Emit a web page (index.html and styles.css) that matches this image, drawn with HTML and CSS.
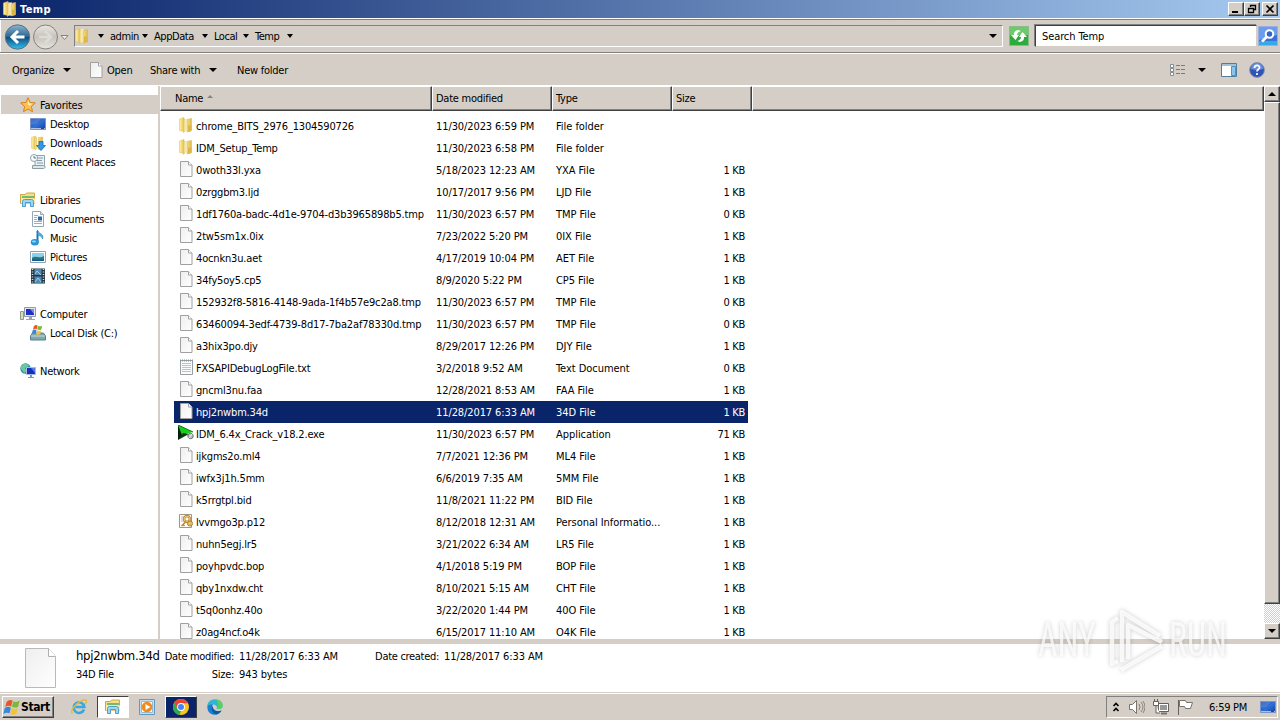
FILE: index.html
```html
<!DOCTYPE html>
<html lang="en">

<head>
    <meta charset="UTF-8">
    <title>Temp</title>
    <link rel="stylesheet" href="styles.css">
</head>

<body>

    <svg class="defs" aria-hidden="true">
        <defs>
            <linearGradient id="gold" x1="0" x2="1"><stop offset="0" stop-color="#fff3b0"/><stop offset=".5" stop-color="#f3db7a"/><stop offset="1" stop-color="#dfb94a"/></linearGradient>
            <linearGradient id="paper" x1="0" y1="0" x2="1" y2="1"><stop offset="0" stop-color="#eee"/><stop offset="1" stop-color="#fff"/></linearGradient>
            <linearGradient id="blue" x1="0" y1="0" x2="1" y2="1"><stop offset="0" stop-color="#183da5"/><stop offset=".5" stop-color="#2f72d8"/><stop offset="1" stop-color="#193b9a"/></linearGradient>
            <linearGradient id="backFill" x1="0" y1="0" x2="0" y2="1"><stop offset="0" stop-color="#8eb5cd"/><stop offset=".48" stop-color="#2b6695"/><stop offset=".5" stop-color="#10487c"/><stop offset="1" stop-color="#30c3f2"/></linearGradient>
            <linearGradient id="fwdFill" x1="0" y1="0" x2="0" y2="1"><stop offset="0" stop-color="#e9e7e2"/><stop offset=".5" stop-color="#c6c3be"/><stop offset="1" stop-color="#e8e5df"/></linearGradient>
        </defs>
        <symbol id="folder" viewBox="0 0 16 16">
            <path d="M1.500 2 6 .5v14l-4.500-1z" fill="url(#gold)" stroke="#e2c566" stroke-width=".6"/>
            <path d="M6 1.500h4v13H6z" fill="#fffae0"/>
            <path d="M5.500 3 7 2v12l-1.500 1.500zM9 2.500l4.500-1v12L9 15z" fill="url(#gold)" stroke="#d9b954" stroke-width=".6"/>
            <path d="M10 8.500h3.500V14L10 15z" fill="#dcb748"/>
        </symbol>
        <symbol id="file" viewBox="0 0 16 16">
            <path d="M2.500.5h8l3.500 3.500v11.500h-11.500z" fill="url(#paper)" stroke="#a0a0a0"/>
            <path d="M10.500 .5V4h3.500" fill="#fff" stroke="#a0a0a0"/>
        </symbol>
        <symbol id="text" viewBox="0 0 16 16">
            <path d="M2.500 1.500h12v14h-12z" fill="#fafcfc" stroke="#96a0a4"/>
            <path d="M2 1.500h13" stroke="#8b979b" stroke-width="2" stroke-dasharray="1 1"/>
            <path d="M4 4.500h9M4 6.500h9M4 8.500h9M4 10.500h9M4 12.500h9" stroke="#b5c6ce"/>
        </symbol>
        <symbol id="idm" viewBox="0 0 16 16">
            <path d="M0 0v15l6-5z" fill="#06200a"/>
            <path d="M0 0 15 7 4 10z" fill="#16cf19"/>
            <path d="M0 15l5-7 6 1z" fill="#123b13"/>
            <path d="M0 0l15 7" stroke="#087a12"/>
            <circle cx="12.500" cy="11" r="2.700" fill="#b8c2c2" stroke="#67706e"/>
            <path d="M10 14l5-6" stroke="#eef1f1"/>
        </symbol>
        <symbol id="cert" viewBox="0 0 16 16">
            <path d="M1.500 1.500h12v13h-12z" fill="#fffef7" stroke="#9e9785"/>
            <path d="M3 4h5M3 6h4M3 8h4" stroke="#b8b8ae"/>
            <circle cx="9" cy="6" r="2.800" fill="none" stroke="#a87420" stroke-width="2.200"/>
            <circle cx="9" cy="6" r="2.800" fill="none" stroke="#eec677" stroke-width="1.100"/>
            <circle cx="12" cy="10.500" r="2.600" fill="#e8bc66" stroke="#936318" stroke-width=".7"/>
            <path d="M8 8.500L3.500 13M5 11.500l1.500 1.500" stroke="#c08c37" stroke-width="1.700"/>
        </symbol>
        <symbol id="star" viewBox="0 0 16 16">
            <path d="M8 .7l2.100 4.700 5.200.5-3.900 3.600 1.100 5.200L8 12.100l-4.500 2.600 1.100-5.200L.7 5.900l5.200-.5z" fill="#ffc24f" stroke="#d7831e"/>
            <path d="M8 3l1.300 3.500 3 .3-2.400 1.800L8 7.500z" fill="#fff0ae"/>
        </symbol>
        <symbol id="desktop" viewBox="0 0 16 16">
            <path d="M.5 2.500h15v11H.5z" fill="url(#blue)" stroke="#7a94c8"/>
            <path d="M1 3h10L6 8 1 9z" fill="#709be3" opacity=".45"/>
            <path d="M1 12.500h14" stroke="#aabfe4"/>
            <path d="M11 12.500h3" stroke="#32417a"/>
        </symbol>
        <symbol id="downloads" viewBox="0 0 16 16">
            <use href="#folder" x="0" width="15" height="16"/>
            <path d="M9 6.500h4v4h2.500L11 15.500 6.500 10.500H9z" fill="#2e9bea" stroke="#1769b0" stroke-width=".8"/>
        </symbol>
        <symbol id="recent" viewBox="0 0 16 16">
            <path d="M5 1.500h9.500v11H5z" fill="#e9f1f4" stroke="#91a4ad"/>
            <path d="M7 4h6M7 6.500h5M7 9h6" stroke="#859ca7"/>
            <path d="M2.500 11.500h11c2 0 2 3 0 3h-11z" fill="#dce5e8" stroke="#8a9da5"/>
            <circle cx="4" cy="4" r="3.500" fill="#f7fcff" stroke="#8ba3ae"/>
            <path d="M4 2v2h2" fill="none" stroke="#597786"/>
        </symbol>
        <symbol id="libraries" viewBox="0 0 16 16">
            <path d="M.5 2.500h5l1-1.500h8v10.500H.5z" fill="#f5df89" stroke="#cfa943"/>
            <path d="M2 4.500h12M2 5.500h12" stroke="#79b96e"/>
            <path d="M1 6.500h14v5H1z" fill="#ffebaa"/>
            <path d="M2.500 14.500V9.500q0-2 2-2h7q2 0 2 2v5h-3v-4h-5v4z" fill="#9bd7f5" stroke="#4e9dcc"/>
        </symbol>
        <symbol id="documents" viewBox="0 0 16 16">
            <path d="M2.500.5h8l3 3v12h-11z" fill="#fff" stroke="#92a7b7"/>
            <path d="M10.500.5v3h3" fill="#dce7ee" stroke="#92a7b7"/>
            <path d="M4 4.500h4M4 6.500h3M4 8.500h3M4 10.500h8M4 12.500h8" stroke="#91b2ce"/>
            <path d="M8 5.500h4v4H8z" fill="#32669b"/>
        </symbol>
        <symbol id="music" viewBox="0 0 16 16">
            <path d="M7.500 1V12" stroke="#1876bd" stroke-width="2"/>
            <path d="M7.500 0c0 4 7 3 5 9 0-2.500-3-3.500-5-4z" fill="#4db4e8" stroke="#2174ae" stroke-width=".6"/>
            <ellipse cx="4.800" cy="12.300" rx="4" ry="3.300" fill="#2996da"/>
            <ellipse cx="4" cy="11.400" rx="2" ry="1" fill="#9ddcf9"/>
        </symbol>
        <symbol id="pictures" viewBox="0 0 16 16">
            <path d="M.5 2.500h15v11H.5z" fill="#fff" stroke="#8ba3b3"/>
            <path d="M2 4h12v8H2z" fill="#8bd1ed"/>
            <path d="M2 9c4-3 7 1 12-2v5H2z" fill="#2a7778"/>
            <path d="M2 10.500h12V12H2z" fill="#195891"/>
        </symbol>
        <symbol id="videos" viewBox="0 0 16 16">
            <path d="M1 .5h14v15H1z" fill="#293640"/>
            <path d="M4.500 1h7v6h-7zM4.500 8.500h7v6.500h-7z" fill="#4c8ab8"/>
            <path d="M5 6l2-3 4 4M5 14l3-4 3 4" fill="none" stroke="#a4d1e4"/>
            <path d="M2.500 1v14M13.500 1v14" stroke="#d3dde3" stroke-width="1.500" stroke-dasharray="1 1.500"/>
        </symbol>
        <symbol id="computer" viewBox="0 0 16 16">
            <path d="M.5 5.500h3v8h-3z" fill="#d1e1be" stroke="#8b9c89"/>
            <path d="M4.500 1.500h11v9h-11z" fill="#e3e6ed" stroke="#9399aa"/>
            <path d="M6 3h8v6H6z" fill="#1b31c4"/>
            <path d="M10 3h4v5z" fill="#788bea"/>
            <path d="M9 11h3v2h3v1H6v-1h3z" fill="#9aa1b2"/>
        </symbol>
        <symbol id="winflag" viewBox="0 0 16 16">
            <path d="M3.500 2.500Q6-.2 9 1.500L7.700 7Q5 5.500 2 7.500z" fill="#e95527"/>
            <path d="M9.700 2q3 1.700 6-.6l-1.500 5.800q-2.700 1.700-5.800.2z" fill="#77ba39"/>
            <path d="M1.700 8.500q3-2 5.700-.4L6.200 13.400Q3.300 12 .2 14z" fill="#3a87d7"/>
            <path d="M8.200 8.500q2.800 1.600 5.800 0l-1.400 5.400q-3 1.800-5.700.2z" fill="#f5c331"/>
        </symbol>
        <symbol id="disk" viewBox="0 0 16 16">
            <path d="M2.500 8h11l2 3v4H.5v-4z" fill="#80a6af" stroke="#597f88"/>
            <path d="M1 11h14" stroke="#c6dbde"/>
            <path d="M12 13h2" stroke="#40e15f"/>
            <use href="#winflag" x="1.500" y="-.5" width="11" height="11"/>
        </symbol>
        <symbol id="network" viewBox="0 0 16 16">
            <circle cx="5.500" cy="5.500" r="5.200" fill="#2b88a9"/>
            <path d="M1 3c3-4 8-2 8 0L5 5l2 3-3 2-3-4z" fill="#6bc89b"/>
            <path d="M6.500 4.500h9v7h-9z" fill="#1730bc" stroke="#a7bce2"/>
            <path d="M11 5h4v5z" fill="#5877e2"/>
            <path d="M10 12h2v2h2v1H8v-1h2z" fill="#7996bf"/>
        </symbol>
    </svg>

    <header class="title-bar">
        <svg class="icon"><use href="#folder"/></svg>
        <h1>Temp</h1>
        <div class="window-buttons">
            <button class="bevel"><svg viewBox="0 0 12 10"><path d="M2 8h6" stroke="#000" stroke-width="2"/></svg></button>
            <button class="bevel"><svg viewBox="0 0 12 10"><path d="M4.500 3V1.500h5v4H8M4 1.500h6M2.500 4.500h5v4h-5zM2 4.500h6" fill="none" stroke="#000" stroke-width="1.300"/></svg></button>
            <button class="bevel close"><svg viewBox="0 0 12 10"><path d="M2.500 1.500l7 7M9.500 1.500l-7 7" stroke="#000" stroke-width="1.700"/></svg></button>
        </div>
    </header>

    <nav class="address-row">
        <svg class="nav-buttons" viewBox="0 0 70 30">
            <circle cx="15.500" cy="16" r="12.200" fill="url(#backFill)" stroke="#567386"/>
            <path d="M16 10l-6 6 6 6M10.500 16h12" fill="none" stroke="#fff" stroke-width="3"/>
            <circle cx="43.500" cy="16" r="12" fill="url(#fwdFill)" stroke="#85827e"/>
            <path d="M43 10l6 6-6 6M37 16h11" fill="none" stroke="#dedbd6" stroke-width="2.500"/>
            <path d="M59 14.500h7L62.500 18.500z" fill="#eee" stroke="#85827e"/>
        </svg>
        <div class="path-box">
            <svg class="icon"><use href="#folder"/></svg>
            <i class="arrow first"></i><span class="c1">admin</span>
            <i class="arrow"></i><span class="c2">AppData</span>
            <i class="arrow"></i><span class="c3">Local</span>
            <i class="arrow"></i><span class="c4">Temp</span>
            <i class="arrow"></i>
            <i class="arrow big drop"></i>
        </div>
        <svg class="refresh" viewBox="0 0 20 20">
            <path d="M.5.5h19v19H.5z" fill="#2faa3c" stroke="#88bd87"/>
            <path d="M1 1h18v8H1z" fill="#6cca6d"/>
            <path d="M9 4C5 5 5 7 5 9H2l4.500 5L10 9H8q0-3 4-4z" fill="#fff"/>
            <path d="M11 16c4-1 4-3 4-5h3l-4.500-5L10 11h2q0 3-4 4z" fill="#fff"/>
        </svg>
        <div class="search">Search Temp</div>
        <svg class="go" viewBox="0 0 20 20">
            <path d="M.5.5h19v19H.5z" fill="#3870d4" stroke="#9caee0"/>
            <path d="M1 1h18v8L1 14z" fill="#6b9eea"/>
            <path d="M1 15h18v4H1z" fill="#36a9e9"/>
            <circle cx="11.500" cy="8" r="3.800" fill="#3365ca" stroke="#fff" stroke-width="2"/>
            <path d="M8.500 11l-4.500 4.500" stroke="#fff" stroke-width="2.600"/>
        </svg>
    </nav>

    <div class="toolbar">
        <span class="t-organize">Organize</span><i class="arrow big"></i>
        <svg class="icon t-icon"><use href="#file"/></svg>
        <span class="t-open">Open</span>
        <span class="t-share">Share with</span><i class="arrow big"></i>
        <span class="t-new">New folder</span>
        <div class="tools">
            <svg class="icon" viewBox="0 0 16 16"><path d="M.5 2.500h3v3h-3zM.5 6.500h3v3h-3zM.5 10.500h3v3h-3z" fill="#fff" stroke="#858c94"/><path d="M6 3.500h4M11 3.500h4M6 7.500h4M11 7.500h4M6 11.500h4M11 11.500h4" stroke="#747b84"/></svg>
            <i class="arrow big"></i>
            <svg class="icon pane" viewBox="0 0 16 16"><path d="M.5 1.500h15v13H.5z" fill="#fff" stroke="#507ca0"/><path d="M1 3h14" stroke="#a4c0d4" stroke-width="2"/><path d="M10.500 4.500h4v9h-4z" fill="#8bc5ea" stroke="#5190ba"/></svg>
            <svg class="icon" viewBox="0 0 16 16"><circle cx="8" cy="8" r="7.400" fill="#2f51b8" stroke="#8993ac"/><path d="M2 7a6 6 0 0 1 12 0Q8 9 2 7z" fill="#6c91dc"/><path d="M5.500 6c0-3.500 5-3.500 5-.5 0 2-2.500 2-2.500 4M8 11v2" fill="none" stroke="#fff" stroke-width="1.700"/></svg>
        </div>
    </div>

    <main class="content">
        <aside class="sidebar">
            <ul>
                <li class="root current"><svg class="icon"><use href="#star"/></svg><span>Favorites</span></li>
                <li><svg class="icon"><use href="#desktop"/></svg><span>Desktop</span></li>
                <li><svg class="icon"><use href="#downloads"/></svg><span>Downloads</span></li>
                <li><svg class="icon"><use href="#recent"/></svg><span>Recent Places</span></li>
            </ul>
            <ul>
                <li class="root"><svg class="icon"><use href="#libraries"/></svg><span>Libraries</span></li>
                <li><svg class="icon"><use href="#documents"/></svg><span>Documents</span></li>
                <li><svg class="icon"><use href="#music"/></svg><span>Music</span></li>
                <li><svg class="icon"><use href="#pictures"/></svg><span>Pictures</span></li>
                <li><svg class="icon"><use href="#videos"/></svg><span>Videos</span></li>
            </ul>
            <ul>
                <li class="root"><svg class="icon"><use href="#computer"/></svg><span>Computer</span></li>
                <li><svg class="icon"><use href="#disk"/></svg><span>Local Disk (C:)</span></li>
            </ul>
            <ul>
                <li class="root"><svg class="icon"><use href="#network"/></svg><span>Network</span></li>
            </ul>
        </aside>

        <section class="list">
            <div class="list-head">
                <div>Name <i class="sort"></i></div>
                <div>Date modified</div>
                <div>Type</div>
                <div>Size</div>
                <div></div>
            </div>
            <div class="rows" id="rows"></div>
        </section>

        <div class="scrollbar">
            <button class="bevel"><i class="arrow big up"></i></button>
            <div class="thumb bevel"></div>
            <div class="track"></div>
            <button class="bevel"><i class="arrow big"></i></button>
        </div>
    </main>

    <footer class="details">
        <svg class="big-file" viewBox="0 0 32 40">
            <path d="M.5.500h23l7 8v31H.5z" fill="url(#paper)" stroke="#b9b9b9"/>
            <path d="M23.500.5v8h7" fill="#fff" stroke="#b0b0b0"/>
        </svg>
        <div class="detail-name">
            <span class="file-name">hpj2nwbm.34d</span>
            <span>34D File</span>
        </div>
        <dl>
            <dt>Date modified:</dt><dd>11/28/2017 6:33 AM</dd>
            <dt>Size:</dt><dd>943 bytes</dd>
        </dl>
        <dl class="created">
            <dt>Date created:</dt><dd>11/28/2017 6:33 AM</dd>
        </dl>
    </footer>

    <div class="taskbar">
        <button class="start bevel"><svg viewBox="0 0 16 16"><use href="#winflag"/></svg><b>Start</b></button>
        <div class="task"><svg class="icon" viewBox="0 0 16 16"><path d="M13 10.500A5.300 5.300 0 1 1 13.300 8H4.500" fill="none" stroke="#38a8df" stroke-width="2.600"/><path d="M1.500 14.500C-2 11 8 1 14 1c3 0 1 3 0 4" fill="none" stroke="#e5b83e" stroke-width="1.300"/></svg></div>
        <div class="task active"><svg class="icon"><use href="#libraries"/></svg></div>
        <div class="task"><svg class="icon" viewBox="0 0 16 16"><path d="M.5.500h15v15H.5z" fill="#c6e0f1" stroke="#6099c2"/><path d="M2.500 2.500h11v11h-11z" fill="#fff" stroke="#92bad3"/><circle cx="8" cy="8" r="5.300" fill="#f28b1d"/><path d="M6.500 5v6l5-3z" fill="#fff"/></svg></div>
        <div class="task chrome"><svg class="icon" viewBox="0 0 16 16"><circle cx="8" cy="8" r="8" fill="#fbc51d"/><path d="M1.100 4A8 8 0 0 1 15 4.200H8L4.600 9.900z" fill="#e84335"/><path d="M1.100 4l3.500 6 3.400 2-1.600 4A8 8 0 0 1 1.100 4z" fill="#30a852"/><circle cx="8" cy="8" r="3.900" fill="#fff"/><circle cx="8" cy="8" r="3" fill="#4285f4"/></svg></div>
        <div class="task"><svg class="icon" viewBox="0 0 16 16"><path d="M.3 8C0 3 4 .3 8 .3c5 0 8 4 7.500 7.200-.4 2.500-4 3.300-6 2.300C11 8 9 5.500 6 5.500S1 7 .3 8z" fill="#2fb6d2"/><path d="M9 .5c5 0 7.500 4 6.500 7.500-1 2.300-4 2.600-6 1.800C12.500 7 11 3 9 .5z" fill="#5ccf62"/><path d="M.3 8C1 6 3.500 5 6 5.500c-2 2-1 5.500 2 6.300 2.500.8 5 .3 6.500-.3-2 4-6 5-9 4C2.500 14.500.3 12 .3 8z" fill="#1a7fd0"/><path d="M5.500 6.500c-2 4 0 7.500 3.500 9 2.500-.5 4.500-2 5.500-4-4 1.500-8.500.5-9-5z" fill="#1159a8"/></svg></div>
        <div class="tray">
            <svg class="chevrons" viewBox="0 0 8 11"><path d="M1.500 4l2.500-2.500 2.500 2.500M1.500 9l2.500-2.500 2.500 2.500" fill="none" stroke="#000" stroke-width="1.600"/></svg>
            <svg class="icon" viewBox="0 0 16 16"><path d="M.5 5.500h3l4-4v13l-4-4h-3z" fill="#fff" stroke="#77736d"/><path d="M10 5q2 3 0 6M12 3q4 5 0 10M14 2q4 6 0 12" fill="none" stroke="#88847d"/></svg>
            <svg class="icon net" viewBox="0 0 16 16"><path d="M5.500 4.500h10v8h-10z" fill="#fff" stroke="#64605a"/><path d="M7 6h7v5H7z" fill="#999"/><path d="M8 14.500h6" stroke="#77736d" stroke-width="2"/><path d="M.5 2.500h5v4h-5zM1.500 0v2M4.500 0v2M3 7v7h4" fill="#fff" stroke="#64605a"/></svg>
            <svg class="icon flag" viewBox="0 0 16 16"><path d="M1.500 1v15" stroke="#64605a"/><path d="M2.500 1.500h6l1 2h6l-2 6h-5l-1-2h-5z" fill="#fff" stroke="#77736d"/></svg>
            <span class="clock">6:59 PM</span>
            <svg class="icon"><use href="#desktop"/></svg>
        </div>
    </div>

    <!-- watermark over the lower right corner -->
    <div class="watermark">
        <span>ANY</span>
        <svg viewBox="0 0 60 70">
            <path d="M12 13l-6 4v42l6-3M16 57V7l38 24M22 54V20l34 17M15 65l41-24" fill="none" stroke="#fff" stroke-width="4.500" stroke-linejoin="round" stroke-opacity=".8"/>
        </svg>
        <span>RUN</span>
    </div>

    <script>
        // name, modified, type, size, icon
        var files = [
            ["chrome_BITS_2976_1304590726", "11/30/2023 6:59 PM", "File folder", "", "folder"],
            ["IDM_Setup_Temp", "11/30/2023 6:58 PM", "File folder", "", "folder"],
            ["0woth33l.yxa", "5/18/2023 12:23 AM", "YXA File", "1 KB", "file"],
            ["0zrggbm3.ljd", "10/17/2017 9:56 PM", "LJD File", "1 KB", "file"],
            ["1df1760a-badc-4d1e-9704-d3b3965898b5.tmp", "11/30/2023 6:57 PM", "TMP File", "0 KB", "file"],
            ["2tw5sm1x.0ix", "7/23/2022 5:20 PM", "0IX File", "1 KB", "file"],
            ["4ocnkn3u.aet", "4/17/2019 10:04 PM", "AET File", "1 KB", "file"],
            ["34fy5oy5.cp5", "8/9/2020 5:22 PM", "CP5 File", "1 KB", "file"],
            ["152932f8-5816-4148-9ada-1f4b57e9c2a8.tmp", "11/30/2023 6:57 PM", "TMP File", "0 KB", "file"],
            ["63460094-3edf-4739-8d17-7ba2af78330d.tmp", "11/30/2023 6:57 PM", "TMP File", "0 KB", "file"],
            ["a3hix3po.djy", "8/29/2017 12:26 PM", "DJY File", "1 KB", "file"],
            ["FXSAPIDebugLogFile.txt", "3/2/2018 9:52 AM", "Text Document", "0 KB", "text"],
            ["gncml3nu.faa", "12/28/2021 8:53 AM", "FAA File", "1 KB", "file"],
            ["hpj2nwbm.34d", "11/28/2017 6:33 AM", "34D File", "1 KB", "file"],
            ["IDM_6.4x_Crack_v18.2.exe", "11/30/2023 6:57 PM", "Application", "71 KB", "idm"],
            ["ijkgms2o.ml4", "7/7/2021 12:36 PM", "ML4 File", "1 KB", "file"],
            ["iwfx3j1h.5mm", "6/6/2019 7:35 AM", "5MM File", "1 KB", "file"],
            ["k5rrgtpl.bid", "11/8/2021 11:22 PM", "BID File", "1 KB", "file"],
            ["lvvmgo3p.p12", "8/12/2018 12:31 AM", "Personal Informatio...", "1 KB", "cert"],
            ["nuhn5egj.lr5", "3/21/2022 6:34 AM", "LR5 File", "1 KB", "file"],
            ["poyhpvdc.bop", "4/1/2018 5:19 PM", "BOP File", "1 KB", "file"],
            ["qby1nxdw.cht", "8/10/2021 5:15 AM", "CHT File", "1 KB", "file"],
            ["t5q0onhz.40o", "3/22/2020 1:44 PM", "40O File", "1 KB", "file"],
            ["z0ag4ncf.o4k", "6/15/2017 11:10 AM", "O4K File", "1 KB", "file"]
        ];
        var selected = "hpj2nwbm.34d";

        document.getElementById("rows").innerHTML = files.map(function (f) {
            return `<div class="row${f[0] === selected ? " selected" : ""}">
                <svg class="icon"><use href="#${f[4]}"/></svg>
                <span class="name">${f[0]}</span>
                <span class="date">${f[1]}</span>
                <span class="type">${f[2]}</span>
                <span class="size">${f[3]}</span>
            </div>`;
        }).join("");
    </script>

</body>

</html>
```
FILE: styles.css
```css
* {
    box-sizing: border-box;
}

body {
    margin: 0;
    width: 1280px;
    height: 720px;
    overflow: hidden;
    display: flex;
    flex-direction: column;
    background-color: #d4cec6;
    font-family: Tahoma, "DejaVu Sans Condensed", "DejaVu Sans", sans-serif;
    font-stretch: condensed;
    font-size: 11px;
    letter-spacing: -0.25px;
    color: #000;
    white-space: nowrap;
}

.defs {
    position: absolute;
    width: 0;
    height: 0;
}

.icon {
    width: 16px;
    height: 16px;
    flex: none;
}

.bevel {
    background-color: #d4cec6;
    border: 1px solid;
    border-color: #fff #404040 #404040 #fff;
    box-shadow: inset -1px -1px #808080;
    padding: 0;
}

.arrow {
    flex: none;
    width: 6px;
    height: 4px;
    background-color: #000;
    clip-path: polygon(0 0, 100% 0, 50% 100%);
}

.arrow.big {
    width: 8px;
    height: 4px;
}

.arrow.up {
    transform: scaleY(-1);
}

/* title bar */
.title-bar {
    height: 18px;
    flex: none;
    display: flex;
    align-items: center;
    padding: 0 2px;
    background: linear-gradient(to right, #0a246a, #a6caf0);
    color: #fff;
}

.title-bar h1 {
    margin: 0 0 0 2px;
    font-size: 11px;
    letter-spacing: 0.4px;
}

.window-buttons {
    display: flex;
    margin-left: auto;
}

.window-buttons button {
    width: 16px;
    height: 14px;
    display: flex;
    align-items: center;
    justify-content: center;
}

.window-buttons svg {
    width: 12px;
    height: 10px;
}

.window-buttons .close {
    margin-left: 2px;
}

/* address row */
.address-row {
    height: 36px;
    flex: none;
    display: flex;
    align-items: center;
    border-top: 1px solid #fff;
    border-bottom: 1px solid #fff;
    box-shadow: inset 0 1px #808080, inset 0 -1px #808080, inset 1px 0 #fff;
    padding-left: 2px;
}

.nav-buttons {
    width: 70px;
    height: 30px;
}

.path-box {
    width: 929px;
    height: 22px;
    margin-left: 2px;
    display: flex;
    align-items: center;
    border: 1px solid;
    border-color: #808080 #fff #fff #808080;
    letter-spacing: -0.45px;
}

.path-box .icon {
    margin-left: -1px;
}

.path-box .first {
    margin-left: 8px;
}

.path-box span {
    margin: 0 5px 0 6px;
}

.c1 {
    width: 27px;
}

.c2 {
    width: 43px;
}

.c3 {
    width: 24px;
}

.c4 {
    width: 27px;
}

.path-box .drop {
    margin-left: auto;
    margin-right: 5px;
}

.refresh {
    width: 20px;
    height: 20px;
    margin-left: 6px;
}

.search {
    width: 222px;
    height: 22px;
    margin-left: 6px;
    padding: 1px 6px 0;
    line-height: 20px;
    background-color: #fff;
    border: 1px solid;
    border-color: #404040 #d4cec6 #d4cec6 #404040;
    box-shadow: -1px -1px #808080;
    letter-spacing: -0.1px;
}

.go {
    width: 20px;
    height: 20px;
    margin-left: 1px;
}

/* toolbar */
.toolbar {
    height: 31px;
    flex: none;
    display: flex;
    align-items: center;
    padding: 1px 0 0 12px;
}

.t-organize {
    width: 51px;
}

.t-icon {
    margin-left: 17px;
}

.t-open {
    width: 43px;
    margin-left: 3px;
}

.t-share {
    width: 59px;
}

.t-new {
    margin-left: 20px;
}

.tools {
    margin-left: auto;
    margin-right: 15px;
    display: flex;
    align-items: center;
    gap: 12px;
}

.tools .pane {
    margin-left: 3px;
}

/* main area */
.content {
    height: 554px;
    flex: none;
    display: flex;
    background-color: #fff;
    border-top: 1px solid #fff;
    overflow: hidden;
}

.sidebar {
    width: 160px;
    flex: none;
    padding-top: 9px;
    border-right: 2px solid #d4cec6;
}

.sidebar ul {
    margin: 0 0 19px;
    padding: 0;
    list-style: none;
}

.sidebar li {
    height: 19px;
    display: flex;
    align-items: center;
    gap: 4px;
    padding-left: 30px;
}

.sidebar span {
    padding-top: 2px;
}

.sidebar .root {
    padding-left: 20px;
}

.sidebar .current {
    margin-left: 1px;
    padding-left: 19px;
    background-color: #d4cec6;
}

.list {
    flex: 1;
    overflow: hidden;
}

.list-head {
    height: 23px;
    display: grid;
    grid-template-columns: 272px 120px 120px 80px 1fr;
    background-color: #d4cec6;
}

.list-head div {
    padding: 1px 0 0 3px;
    line-height: 22px;
    border: 1px solid;
    border-color: #fff #404040 #404040 #fff;
    box-shadow: inset -1px -1px #808080;
}

.list-head div:first-child {
    padding-left: 14px;
}

.sort {
    display: inline-block;
    width: 6px;
    height: 3px;
    margin: 0 0 4px 1px;
    background-color: #858585;
    clip-path: polygon(50% 0, 100% 100%, 0 100%);
}

.rows {
    padding: 6px 0 0 14px;
}

.row {
    width: 574px;
    height: 22px;
    display: grid;
    grid-template-columns: 22px 240px 120px 120px 69px;
    align-items: center;
    letter-spacing: -0.1px;
}

.row .icon {
    margin: -2px 0 0 4px;
}

.row .name {
    letter-spacing: -0.16px;
}

.row .type {
    letter-spacing: -0.05px;
}

.row .size {
    text-align: right;
    letter-spacing: -0.3px;
}

.row.selected {
    background-color: #0a246a;
    color: #fff;
}

.scrollbar {
    width: 16px;
    display: flex;
    flex-direction: column;
}

.scrollbar button {
    height: 16px;
    display: flex;
    align-items: center;
    justify-content: center;
}

.thumb {
    height: 502px;
}

.track {
    flex: 1;
    background: repeating-conic-gradient(#d4cec6 0 25%, #fff 0 50%) 0 0 / 2px 2px;
}

/* details pane */
.details {
    height: 53px;
    flex: none;
    display: flex;
    background-color: #fff;
    border-top: 5px solid #d4cec6;
}

.big-file {
    width: 32px;
    height: 40px;
    margin: 4px 19px 0 25px;
}

.detail-name {
    width: 88px;
    display: flex;
    flex-direction: column;
    line-height: 18px;
    padding-top: 4px;
}

.file-name {
    font-size: 13px;
    margin-top: -1px;
    margin-bottom: 1px;
    letter-spacing: -0.3px;
}

.details dl {
    margin: 4px 0 0;
    display: grid;
    grid-template-columns: 70px 133px;
    grid-auto-rows: 18px;
    column-gap: 5px;
    line-height: 18px;
}

.details .created {
    grid-template-columns: 67px 110px;
}

.details dt {
    text-align: right;
    letter-spacing: -0.3px;
}

.details dd {
    margin: 0;
    letter-spacing: -0.1px;
}

/* taskbar */
.taskbar {
    flex: 1;
    display: flex;
    align-items: center;
    padding: 1px 2px 0;
    border-top: 1px solid #d4cec6;
    box-shadow: inset 0 1px #fff;
}

.start {
    width: 52px;
    height: 22px;
    display: flex;
    align-items: center;
    font: inherit;
    font-size: 12px;
    letter-spacing: -0.4px;
    margin-right: 9px;
}

.start svg {
    width: 17px;
    height: 17px;
    margin-right: 1px;
    flex: none;
}

.task {
    width: 32px;
    height: 22px;
    margin-right: 2px;
    display: flex;
    align-items: center;
    justify-content: center;
}

.task.active,
.task.chrome {
    border: 1px solid;
    border-color: #404040 #fff #fff #404040;
    background-color: #fff;
}

.task.chrome {
    border-color: #fff #404040 #404040 #fff;
    background-color: #0a246a;
}

.tray {
    width: 172px;
    height: 22px;
    margin-left: auto;
    display: flex;
    align-items: center;
    padding-left: 5px;
    border: 1px solid;
    border-color: #808080 #fff #fff #808080;
}

.chevrons {
    width: 8px;
    height: 11px;
    margin-right: 9px;
}

.net {
    margin-left: 8px;
}

.flag {
    margin-left: 8px;
}

.clock {
    width: 40px;
    margin: 0 11px 0 16px;
}

.watermark {
    position: absolute;
    left: 1038px;
    top: 604px;
    height: 72px;
    display: flex;
    align-items: center;
    filter: drop-shadow(0 0 2px rgba(0, 0, 0, 0.25));
}

.watermark span {
    width: 66px;
    font-family: Roboto, sans-serif;
    font-size: 49px;
    line-height: 72px;
    letter-spacing: 0;
    color: rgba(255, 255, 255, 0.75);
    transform: scaleX(0.69);
    transform-origin: left;
}

.watermark svg {
    width: 60px;
    height: 70px;
    margin-left: 2px;
    margin-right: 3px;
}
```
